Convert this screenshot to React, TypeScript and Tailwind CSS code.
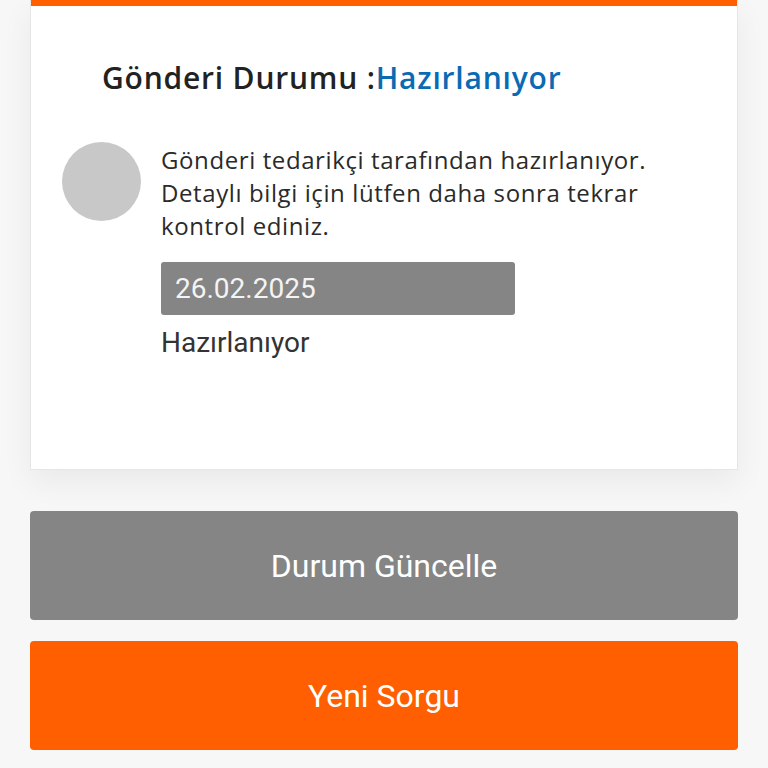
export default function App() {
  return (
    <div className="min-h-[768px] w-[768px] bg-[#f7f7f7] overflow-hidden">
      <div className="mx-[30px] bg-white border border-[#e6e6e6] border-t-0 shadow-[0_12px_30px_rgba(0,0,0,0.06)]">
        <div className="h-[6px] bg-[#ff5f00]" />
        <div className="pl-[71px] pt-[55px] pb-[110px] pr-6">
          <h1 className="text-[30px] leading-[34px] font-semibold text-[#222] tracking-[0.8px] [font-family:'Open_Sans',sans-serif]">
            Gönderi Durumu :<span className="text-[#0a6bb3]">Hazırlanıyor</span>
          </h1>
          <div className="mt-[48px] flex -ml-[40px]">
            <div className="w-[79px] h-[79px] rounded-full bg-[#c8c8c8] shrink-0 -mt-[1px]" />
            <div className="ml-[20px]">
              <p className="text-[24px] leading-[33px] text-[#2a2a2a] tracking-[0.6px] [font-family:'Open_Sans',sans-serif]">
                Gönderi tedarikçi tarafından hazırlanıyor.
                <br />
                Detaylı bilgi için lütfen daha sonra tekrar
                <br />
                kontrol ediniz.
              </p>
              <div className="mt-[20px] w-[354px] h-[53px] rounded-[3px] bg-[#858585] flex items-center pl-[14px] text-[28px] text-[#f4f4f4] [font-family:'Roboto',sans-serif]">
                26.02.2025
              </div>
              <div className="mt-[12px] text-[28px] leading-[32px] text-[#333] [font-family:'Roboto',sans-serif]">
                Hazırlanıyor
              </div>
            </div>
          </div>
        </div>
      </div>
      <div className="mx-[30px] mt-[41px] flex flex-col gap-[21px] [font-family:'Roboto',sans-serif]">
        <button className="h-[109px] rounded-[4px] bg-[#858585] text-white text-[32px]">Durum Güncelle</button>
        <button className="h-[109px] rounded-[4px] bg-[#ff5f00] text-white text-[32px]">Yeni Sorgu</button>
      </div>
    </div>
  );
}
